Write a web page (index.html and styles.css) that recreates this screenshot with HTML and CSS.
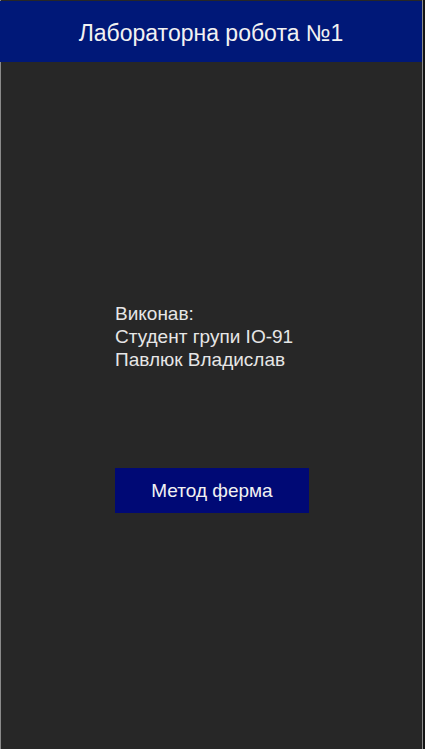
FILE: index.html
```html
<!DOCTYPE html>
<html lang="uk">
<head>
<meta charset="utf-8">
<title>Лабораторна робота №1</title>
<link rel="stylesheet" href="styles.css">
</head>
<body>
<div class="window">
  <header class="appbar">
    <h1 class="title">Лабораторна робота №1</h1>
  </header>
  <main class="content">
    <div class="info">
      <div>Виконав:</div>
      <div>Студент групи ІО-91</div>
      <div>Павлюк Владислав</div>
    </div>
    <button class="btn" type="button">Метод ферма</button>
  </main>
</div>
</body>
</html>
```
FILE: styles.css
```css
html, body {
  margin: 0;
  padding: 0;
  height: 100%;
  background: #141414;
  font-family: "Liberation Sans", Arial, sans-serif;
}

.window {
  box-sizing: border-box;
  width: 423px;
  height: 749px;
  padding-top: 1px;
  background: #272727;
  border-left: 1px solid #8a8a8a;
  border-right: 1px solid #8a8a8a;
  display: flex;
  flex-direction: column;
}

.appbar {
  box-sizing: border-box;
  height: 61px;
  padding-top: 3px;
  margin-left: -1px;
  background: #001878;
  display: flex;
  align-items: center;
  justify-content: center;
}

.title {
  margin: 0;
  font-size: 23px;
  font-weight: normal;
  color: #f2f2f2;
}

.content {
  padding: 240px 0 0 114px;
  display: flex;
  flex-direction: column;
  align-items: flex-start;
}

.info {
  font-size: 19px;
  line-height: 23px;
  color: #e6e6e6;
}

.btn {
  margin-top: 97px;
  width: 194px;
  height: 45px;
  border: 0;
  background: #000975;
  color: #f2f2f2;
  font-family: "Liberation Sans", Arial, sans-serif;
  font-size: 19px;
  padding: 0;
}
```
